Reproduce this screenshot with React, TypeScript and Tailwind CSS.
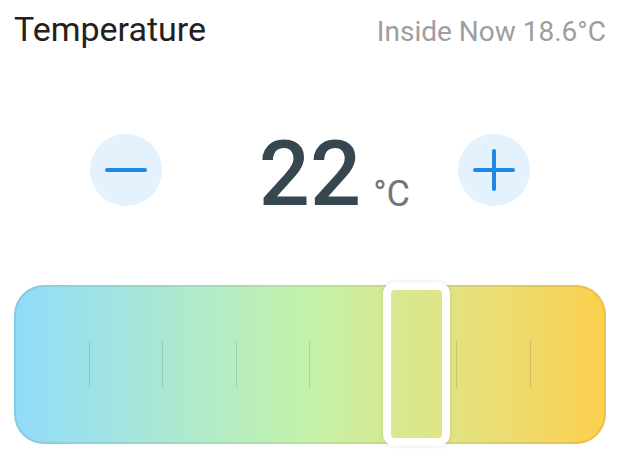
const ticks = [1, 2, 3, 4, 5, 6, 7];

export default function App() {
  return (
    <div className="w-[623px] h-[464px] bg-white font-['Roboto',sans-serif] overflow-hidden">
      {/* Header */}
      <div className="flex items-baseline justify-between pl-[14px] pr-[17px] pt-[4px]">
        <span className="text-[34px] text-[#212121]">Temperature</span>
        <span className="text-[28px] text-[#9e9e9e]">Inside Now 18.6°C</span>
      </div>

      {/* Setpoint */}
      <div className="grid grid-cols-[72px_1fr_72px] items-start pl-[90px] pr-[93px] mt-[75px]">
        <button className="mt-[4px] flex h-[72px] w-[72px] items-center justify-center rounded-full bg-[#e3f2fd]">
          <svg width="42" height="42" viewBox="0 0 42 42">
            <path d="M2 21H40" stroke="#1e88e5" strokeWidth="4" strokeLinecap="round" />
          </svg>
        </button>
        <div className="flex justify-center">
          <span className="relative text-[90px] font-medium leading-none text-[#37474f]">
            22
            <span className="absolute bottom-[8px] left-full ml-[12px] text-[36px] font-normal leading-none text-[#757575]">
              °C
            </span>
          </span>
        </div>
        <button className="mt-[4px] flex h-[72px] w-[72px] items-center justify-center rounded-full bg-[#e3f2fd]">
          <svg width="42" height="42" viewBox="0 0 42 42">
            <path d="M2 21H40M21 2V40" stroke="#1e88e5" strokeWidth="4" strokeLinecap="round" />
          </svg>
        </button>
      </div>

      {/* Slider */}
      <div className="ml-[14px] mr-[17px] mt-[65px] relative h-[159px] rounded-[30px] border-2 border-black/[0.07] bg-origin-border bg-gradient-to-r from-[#90dbfa] via-[#c4f2a8] to-[#fdcf4c]">
        <div className="flex h-full">
          {ticks.map((t) => (
            <div key={t} className="flex flex-1 items-center justify-end">
              <div className="h-[47px] w-px bg-black/[0.12]" />
            </div>
          ))}
          <div className="flex-1" />
        </div>
        <div className="absolute left-[367px] top-[-5px] h-[164px] w-[67px] rounded-[12px] border-[8px] border-white shadow-[0_0_4px_rgba(0,0,0,0.12)]" />
      </div>
    </div>
  );
}
